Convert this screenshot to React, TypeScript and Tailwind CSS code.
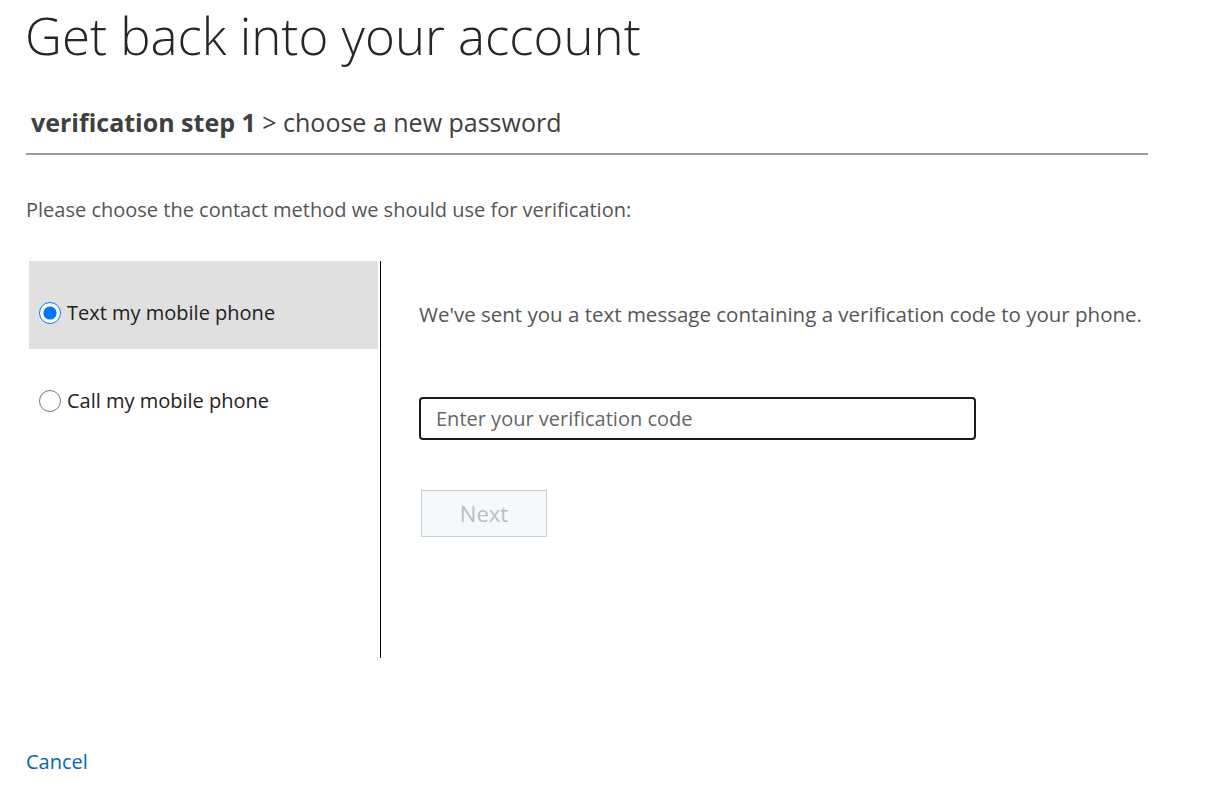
import React from "react";

export default function App() {
  const font = { fontFamily: '"Open Sans", "Noto Sans", sans-serif' };
  return (
    <div className="w-[1217px] h-[800px] bg-white relative overflow-hidden" style={font}>
      <div className="pl-[26px] pr-[69px]">
        <h1 className="text-[51px] leading-[70px] font-light text-[#262626] -ml-[1px]">Get back into your account</h1>
        <div className="mt-[37px] pl-[5px] text-[25px] leading-[30px] text-[#404040]">
          <span className="font-bold">verification step 1</span>
          <span className="font-normal"> &gt; choose a new password</span>
        </div>
        <div className="mt-[16px] h-[2px] bg-[#9a9a9a] w-[1122px]" />
        <p className="mt-[42px] text-[20px] leading-[26px] text-[#555]">Please choose the contact method we should use for verification:</p>
        <div className="mt-[38px] flex h-[397px]">
          <div className="w-[355px] pl-[3px] border-r border-black">
            <label className="flex items-center h-[88px] bg-[#e0e0e0] w-[349px] pl-[10px] pt-[15px] gap-[6px] text-[20px] text-[#222]">
              <input type="radio" name="m" defaultChecked className="w-[22px] h-[22px] m-0" />
              <span>Text my mobile phone</span>
            </label>
            <label className="flex items-center h-[88px] pl-[10px] pt-[15px] gap-[6px] text-[20px] text-[#222]">
              <input type="radio" name="m" className="w-[22px] h-[22px] m-0" />
              <span>Call my mobile phone</span>
            </label>
          </div>
          <div className="pl-[38px] pt-[40px]">
            <p className="text-[20.5px] leading-[26px] text-[#555] whitespace-nowrap">We've sent you a text message containing a verification code to your phone.</p>
            <input
              type="text"
              placeholder="Enter your verification code"
              className="mt-[70px] block w-[557px] h-[43px] border-2 border-[#1a1a1a] rounded-[4px] px-[15px] text-[20px] text-[#222] placeholder:text-[#666] outline-none"
            />
            <button className="mt-[50px] ml-[2px] w-[126px] h-[47px] border border-[#c8d0d8] bg-[#f6f9fc] text-[22px] text-[#b7c0c7]">Next</button>
          </div>
        </div>
        <a href="#" className="block mt-[91px] text-[20px] leading-[26px] text-[#0067b8]">Cancel</a>
      </div>
    </div>
  );
}
